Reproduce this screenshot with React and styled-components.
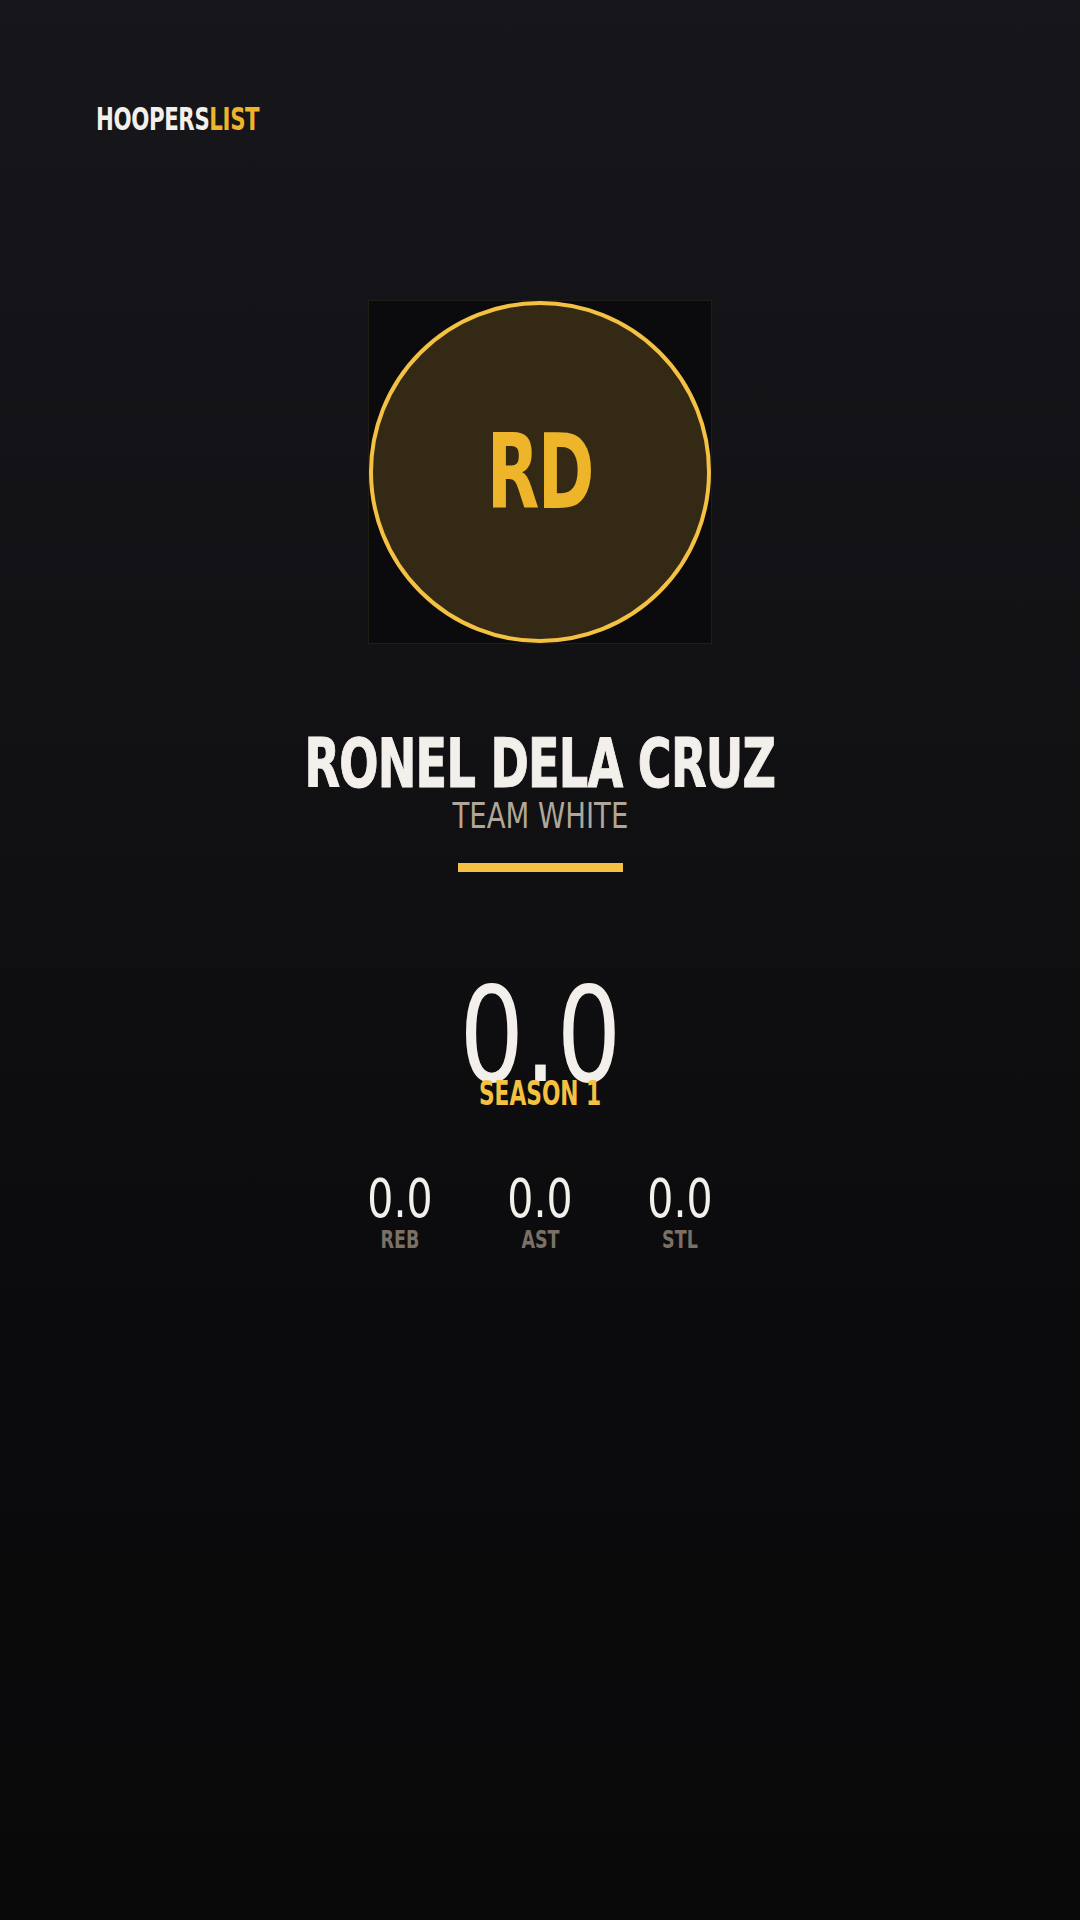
import React from 'react';
import styled, { createGlobalStyle } from 'styled-components';

const GlobalStyle = createGlobalStyle`
    html, body {
        margin: 0;
        padding: 0;
        background: #0a0a0b;
    }
    * {
        box-sizing: border-box;
    }
`;

// no real condensed display face offline, so squeeze DejaVu Condensed a bit
const CONDENSED = `"DejaVu Sans Condensed", "DejaVu Sans", "Liberation Sans", sans-serif`;

const Page = styled.div`
    min-height: 1920px;
    width: 1080px;
    display: flex;
    flex-direction: column;
    background: linear-gradient(180deg, #17161b 0%, #111013 40%, #0b0b0d 70%, #09090a 100%);
    font-family: ${CONDENSED};
`;

const Header = styled.header`
    padding: 103px 96px 0;
`;

const Logo = styled.div`
    display: inline-block;
    font-size: 32px;
    line-height: 1;
    font-weight: 700;
    color: #f3f0eb;
    letter-spacing: -0.5px;
    transform: scaleX(0.74);
    transform-origin: left center;

    span {
        color: #eeb42a;
    }
`;

const Main = styled.main`
    display: flex;
    flex-direction: column;
    align-items: center;
`;

const AvatarFrame = styled.div`
    margin-top: 165px;
    width: 344px;
    height: 344px;
    background: #0b0b0d;
    border: 1px solid rgba(245, 193, 66, 0.1);
    display: flex;
`;

const AvatarCircle = styled.div`
    flex: 1;
    border-radius: 50%;
    border: 4px solid #f5c142;
    background: #332915;
    display: flex;
    align-items: center;
    justify-content: center;
`;

const Initials = styled.span`
    color: #eeb42a;
    font-size: 104px;
    font-weight: 700;
    line-height: 1;
    letter-spacing: -2px;
    transform: scaleX(0.73);
`;

const Name = styled.h1`
    margin: 86px 0 0;
    font-size: 68px;
    line-height: 1;
    font-weight: 700;
    color: #f3f0eb;
    letter-spacing: -1px;
    -webkit-text-stroke: 1px #f3f0eb;
    transform: scaleX(0.755);
`;

const Team = styled.div`
    font-size: 36px;
    line-height: 1;
    font-weight: 400;
    color: #b0a699;
    transform: scaleX(0.85);
`;

const Divider = styled.div`
    margin-top: 29px;
    width: 165px;
    height: 9px;
    background: #f5c044;
`;

const BigValue = styled.div`
    margin-top: 97px;
    font-size: 132px;
    line-height: 1;
    font-weight: 400;
    color: #f3f0eb;
    transform: scaleX(0.86);
`;

const Season = styled.div`
    margin-top: -25px;
    font-size: 34px;
    line-height: 1;
    font-weight: 700;
    color: #f5c142;
    position: relative;
    transform: scaleX(0.71);
`;

const StatRow = styled.div`
    margin-top: 62px;
    display: flex;
`;

const Stat = styled.div`
    width: 140px;
    display: flex;
    flex-direction: column;
    align-items: center;
`;

const StatValue = styled.div`
    font-size: 53px;
    line-height: 1;
    color: #f3f0eb;
    transform: scaleX(0.86);
`;

const StatLabel = styled.div`
    margin-top: 2px;
    font-size: 25px;
    line-height: 1;
    font-weight: 700;
    color: #7a7065;
    transform: scaleX(0.78);
`;

const stats = [
    { label: 'REB', value: '0.0' },
    { label: 'AST', value: '0.0' },
    { label: 'STL', value: '0.0' },
];

export default function App() {
    return (
        <Page>
            <GlobalStyle />
            <Header>
                <Logo>
                    HOOPERS<span>LIST</span>
                </Logo>
            </Header>
            <Main>
                <AvatarFrame>
                    <AvatarCircle>
                        <Initials>RD</Initials>
                    </AvatarCircle>
                </AvatarFrame>
                <Name>RONEL DELA CRUZ</Name>
                <Team>TEAM WHITE</Team>
                <Divider />
                <BigValue>0.0</BigValue>
                <Season>SEASON 1</Season>
                <StatRow>
                    {stats.map(s => (
                        <Stat key={s.label}>
                            <StatValue>{s.value}</StatValue>
                            <StatLabel>{s.label}</StatLabel>
                        </Stat>
                    ))}
                </StatRow>
            </Main>
        </Page>
    );
}
